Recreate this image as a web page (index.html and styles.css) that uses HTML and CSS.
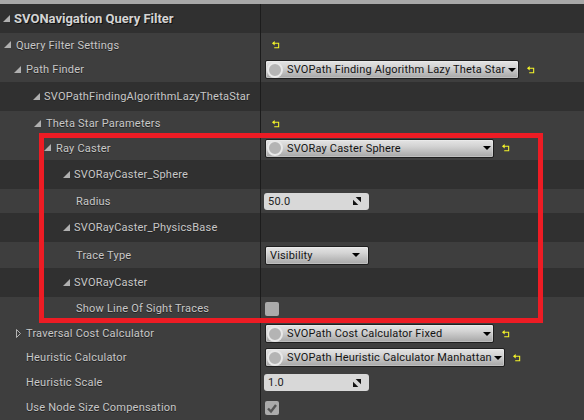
FILE: index.html
```html
<!DOCTYPE html>
<html lang="en">
<head>
    <meta charset="UTF-8">
    <title>SVONavigation Query Filter</title>
    <link rel="stylesheet" href="styles.css">
</head>
<body>
    <svg class="defs" width="0" height="0">
        <symbol id="reset" viewBox="0 0 9 9">
            <path d="M1 2.5H7.5V7.5H2.5" fill="none" stroke="#f4f42a" stroke-width="1.2"/>
            <path d="M0 2.5L3 0V5Z" fill="#f4f42a"/>
        </symbol>
        <symbol id="open" viewBox="0 0 7 7">
            <path d="M7 0V7H0Z" fill="#b0b0b0"/>
        </symbol>
        <symbol id="spin" viewBox="0 0 9 9">
            <path d="M3 0H9V6Z" fill="#111"/>
            <path d="M0 3V9H6Z" fill="#111"/>
        </symbol>
    </svg>

    <div class="panel">
        <!-- Kopfzeile -->
        <div class="row dark h29">
            <div class="label title pad3 tight"><svg class="arrow"><use href="#open"/></svg>SVONavigation Query Filter</div>
            <div class="value"></div>
        </div>
        <div class="row h24">
            <div class="label pad4"><svg class="arrow"><use href="#open"/></svg>Query Filter Settings</div>
            <div class="value"><svg class="reset first"><use href="#reset"/></svg></div>
        </div>
        <div class="row h25">
            <div class="label pad14"><svg class="arrow"><use href="#open"/></svg>Path Finder</div>
            <div class="value">
                <div class="combo w253"><span class="ball"></span><span class="combo-text">SVOPath Finding Algorithm Lazy Theta Star</span><span class="caret"></span></div>
                <svg class="reset"><use href="#reset"/></svg>
            </div>
        </div>
        <div class="row dark h29">
            <div class="label pad33 tight"><svg class="arrow"><use href="#open"/></svg>SVOPathFindingAlgorithmLazyThetaStar</div>
            <div class="value"></div>
        </div>
        <div class="row h25">
            <div class="label pad34"><svg class="arrow"><use href="#open"/></svg>Theta Star Parameters</div>
            <div class="value"><svg class="reset first"><use href="#reset"/></svg></div>
        </div>
        <div class="row h24">
            <div class="label pad44"><svg class="arrow"><use href="#open"/></svg>Ray Caster</div>
            <div class="value">
                <div class="combo w228"><span class="ball"></span><span class="combo-text">SVORay Caster Sphere</span><span class="caret"></span></div>
                <svg class="reset"><use href="#reset"/></svg>
            </div>
        </div>
        <div class="row dark h29">
            <div class="label pad63 tight"><svg class="arrow"><use href="#open"/></svg>SVORayCaster_Sphere</div>
            <div class="value"></div>
        </div>
        <div class="row h24">
            <div class="label pad76">Radius</div>
            <div class="value"><div class="num"><span>50.0</span><svg class="spin"><use href="#spin"/></svg></div></div>
        </div>
        <div class="row dark h29">
            <div class="label pad63 tight"><svg class="arrow"><use href="#open"/></svg>SVORayCaster_PhysicsBase</div>
            <div class="value"></div>
        </div>
        <div class="row h26">
            <div class="label pad76">Trace Type</div>
            <div class="value">
                <div class="combo w103 plain"><span class="combo-text">Visibility</span><span class="caret"></span></div>
            </div>
        </div>
        <div class="row dark h29">
            <div class="label pad63 tight"><svg class="arrow"><use href="#open"/></svg>SVORayCaster</div>
            <div class="value"></div>
        </div>
        <div class="row h23">
            <div class="label pad76">Show Line Of Sight Traces</div>
            <div class="value"><div class="check"></div></div>
        </div>
        <div class="row h25 shift">
            <div class="label pad16"><svg class="arrow-closed" viewBox="0 0 5 9"><path d="M.5.5L4.5 4.5L.5 8.5Z" fill="none" stroke="#b4b4b4"/></svg>Traversal Cost Calculator</div>
            <div class="value">
                <div class="combo w228"><span class="ball"></span><span class="combo-text">SVOPath Cost Calculator Fixed</span><span class="caret"></span></div>
                <svg class="reset"><use href="#reset"/></svg>
            </div>
        </div>
        <div class="row h25">
            <div class="label pad26">Heuristic Calculator</div>
            <div class="value">
                <div class="combo w239"><span class="ball"></span><span class="combo-text">SVOPath Heuristic Calculator Manhattan</span><span class="caret"></span></div>
                <svg class="reset"><use href="#reset"/></svg>
            </div>
        </div>
        <div class="row h25">
            <div class="label pad26">Heuristic Scale</div>
            <div class="value"><div class="num"><span>1.0</span><svg class="spin"><use href="#spin"/></svg></div></div>
        </div>
        <div class="row h25">
            <div class="label pad26">Use Node Size Compensation</div>
            <div class="value">
                <div class="check"><svg viewBox="0 0 14 14"><path d="M3 7.5L6 10.5L11 4" fill="none" stroke="#555" stroke-width="2.4"/></svg></div>
            </div>
        </div>

        <!-- roter Rahmen -->
        <div class="highlight"></div>
    </div>
</body>
</html>
```

FILE: styles.css
```css
html, body {
    margin: 0;
    height: 420px;
    overflow: hidden;
}

body {
    background-color: #3e3e3e;
    font-family: Roboto, "Liberation Sans", sans-serif;
    font-size: 11px;
    letter-spacing: 0.22px;
    color: #c8c8c8;
}

.defs {
    position: absolute;
}

.panel {
    position: relative;
    border-top: 4px solid #a8a8a8;
}

.row {
    display: grid;
    grid-template-columns: 260px 1fr;
    background-color: #3e3e3e;
}

.row.dark {
    background-color: #303030;
}

.h23 { height: 23px; }
.h24 { height: 24px; }
.h25 { height: 25px; }
.h26 { height: 26px; }
.h29 { height: 29px; }

.shift {
    padding-top: 1px;
    margin-bottom: -1px;
}

.label {
    display: flex;
    align-items: center;
    white-space: nowrap;
    text-shadow: 0 1px 0 #222;
}

.title {
    font-size: 13px;
    font-weight: 700;
    letter-spacing: 0;
    color: #d4d4d4;
    text-shadow: 1px 1px 0 #111;
}

.pad3 { padding-left: 3px; }
.pad4 { padding-left: 4px; }
.pad14 { padding-left: 14px; }
.pad16 { padding-left: 16px; }
.pad26 { padding-left: 26px; }
.pad33 { padding-left: 33px; }
.pad34 { padding-left: 34px; }
.pad44 { padding-left: 44px; }
.pad63 { padding-left: 63px; }
.pad76 { padding-left: 76px; }

.arrow {
    flex: none;
    width: 7px;
    height: 7px;
    margin-right: 5px;
    margin-top: -1px;
}

.tight .arrow {
    margin-right: 4px;
}

.arrow-closed {
    flex: none;
    width: 5px;
    height: 9px;
    margin-right: 5px;
}

.value {
    display: flex;
    align-items: center;
    border-left: 1px solid #1c1c1c;
    padding-left: 4px;
}

.reset {
    flex: none;
    width: 8px;
    height: 8px;
    margin-left: 8px;
}

.reset.first {
    margin-left: 7px;
}

.combo {
    display: flex;
    align-items: center;
    box-sizing: border-box;
    height: 19px;
    padding: 0 2px 0 1px;
    border: 1px solid #1e1e1e;
    border-radius: 2px;
    background: linear-gradient(#e4e4e4, #d4d4d4 35%, #a6a6a6);
    box-shadow: inset 0 0 0 1px rgba(255, 255, 255, 0.25);
    color: #141414;
    letter-spacing: 0.17px;
}

.combo.plain {
    padding-left: 4px;
    padding-right: 8px;
}

.w103 { width: 104px; }
.w228 { width: 229px; }
.w239 { width: 240px; }
.w253 { width: 254px; }

.ball {
    flex: none;
    box-sizing: border-box;
    width: 16px;
    height: 16px;
    margin-right: 4px;
    border: 2px solid #e8e8e8;
    border-radius: 50%;
    background-color: #b4b4b4;
}

.combo-text {
    flex: 1;
    white-space: nowrap;
}

.caret {
    flex: none;
    width: 0;
    height: 0;
    margin-left: 1px;
    border-left: 4px solid transparent;
    border-right: 4px solid transparent;
    border-top: 4px solid #000;
}

.num {
    display: flex;
    align-items: center;
    justify-content: space-between;
    box-sizing: border-box;
    width: 105px;
    height: 17px;
    margin-left: -1px;
    padding: 0 6px 0 4px;
    border-radius: 3px;
    background-color: #d8d8d8;
    color: #222;
}

.spin {
    width: 8px;
    height: 8px;
    margin-right: 2px;
}

.check {
    box-sizing: border-box;
    width: 14px;
    height: 14px;
    border-radius: 2px;
    background-color: #ababab;
}

.check svg {
    display: block;
}

/* liegt über den Zeilen */
.highlight {
    position: absolute;
    left: 39px;
    top: 129px;
    width: 494px;
    height: 180px;
    border: 5px solid #ed1c24;
}
```
